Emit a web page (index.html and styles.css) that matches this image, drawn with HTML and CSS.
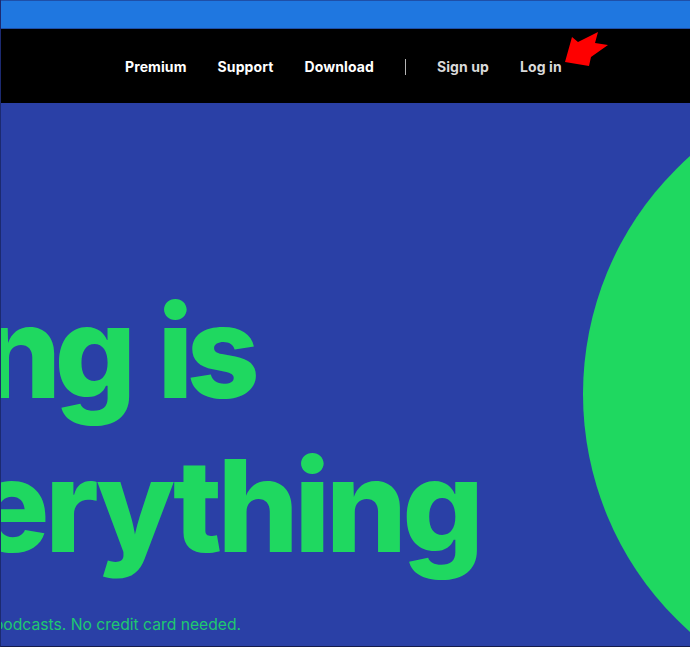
FILE: index.html
```html
<!DOCTYPE html>
<html lang="en">
<head>
<meta charset="utf-8">
<title>Spotify</title>
<link rel="stylesheet" href="styles.css">
</head>
<body>
<div class="page">
  <div class="topbar"></div>
  <nav class="nav">
    <a class="link">Premium</a>
    <a class="link">Support</a>
    <a class="link">Download</a>
    <span class="divider"></span>
    <a class="link muted">Sign up</a>
    <a class="link muted">Log in</a>
    <svg class="arrow" viewBox="0 0 50 40" width="50" height="40" aria-hidden="true">
      <polygon points="5,31 12,6 18,11 38,1 35,12 48,14 31,26 29,35" fill="#fe0000"/>
    </svg>
  </nav>
  <main class="hero">
    <div class="circle"></div>
    <div class="copy">
      <h1 class="title"><span class="line line-one">Listening is</span><span class="line line-two">everything</span></h1>
      <p class="sub">Millions of songs and podcasts. No credit card needed.</p>
    </div>
  </main>
</div>
</body>
</html>
```
FILE: styles.css
```css
* { box-sizing: border-box; }
html, body { margin: 0; height: 100%; }
body { background: #2a40a6; font-family: Inter, "Liberation Sans", sans-serif; overflow: hidden; }
.page { width: 690px; height: 647px; display: flex; flex-direction: column; position: relative; overflow: hidden; border-left: 1px solid #1c2a70; border-bottom: 1px solid #141c4c; }
.topbar { height: 29px; flex: none; background: #1f77e0; border-top: 1px solid #1e4fa8; border-bottom: 1px solid #1e4fa8; }
.nav { height: 74px; flex: none; background: #000; display: flex; align-items: center; gap: 31px; padding: 2px 0 0 124px; position: relative; }
.link { color: #fff; font-size: 14px; font-weight: 700; line-height: 20px; letter-spacing: 0.1px; }
.muted { color: #d9d9d9; }
.divider { width: 1px; height: 16px; background: #b5b5b5; }
.arrow { position: absolute; left: 559px; top: 2px; }
.hero { flex: 1; position: relative; overflow: hidden; background: #2a40a6; }
.circle { position: absolute; left: 582px; top: -27px; width: 636px; height: 636px; border-radius: 50%; background: #1fd860; }
.copy { padding-top: 172px; position: relative; white-space: nowrap; }
.title { margin: 0; color: #1fd860; font-size: 128px; line-height: 154px; font-weight: 800; }
.line { display: block; }
.line-one { margin-left: -396px; letter-spacing: -7px; word-spacing: 7px; }
.line-two { margin-left: -170px; letter-spacing: -4.7px; }
.sub { margin: 30px 0 0 -169px; color: #1fc870; font-size: 15.7px; line-height: 24px; }
```
